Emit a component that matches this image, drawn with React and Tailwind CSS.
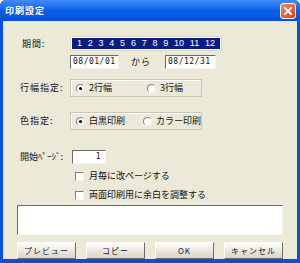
import React from "react";

const jp = { fontFamily: '"Noto Sans CJK JP", "Noto Sans", sans-serif' };

const Radio = ({ checked, label }) => (
  <div className="flex items-center gap-[4px] whitespace-nowrap">
    <span className="flex h-[9px] w-[9px] items-center justify-center rounded-full border border-t-[#808080] border-l-[#808080] border-b-[#f0f0f0] border-r-[#f0f0f0] bg-white">
      {checked && <span className="h-[3px] w-[3px] rounded-full bg-black" />}
    </span>
    <span>{label}</span>
  </div>
);

const Check = ({ label }) => (
  <div className="flex h-[12px] items-center gap-[5px] whitespace-nowrap pl-[72px]">
    <span className="h-[9px] w-[9px] border border-t-[#808080] border-l-[#808080] border-b-[#f4f3ee] border-r-[#f4f3ee] bg-white" />
    <span>{label}</span>
  </div>
);

const Field = ({ value, className = "" }) => (
  <div className={`flex h-[14px] items-center border border-t-[#6b6b6b] border-l-[#6b6b6b] border-b-[#f4f3ee] border-r-[#f4f3ee] bg-white px-[2px] text-[8px] tracking-[0.5px] ${className}`} style={{ fontFamily: '"DejaVu Sans Mono", monospace' }}>
    {value}
  </div>
);

const Btn = ({ children }) => (
  <button type="button" className="flex h-[17px] w-[59px] items-center justify-center whitespace-nowrap border border-t-white border-l-white border-b-[#6f6d62] border-r-[#6f6d62] bg-gradient-to-b from-[#fdfdfb] to-[#d8d5c8] text-[8px] tracking-[1px] text-[#222]">
    {children}
  </button>
);

export default function App() {
  const months = [1, 2, 3, 4, 5, 6, 7, 8, 9, 10, 11, 12];
  return (
    <div className="flex h-[263px] w-[300px] flex-col overflow-hidden rounded-t-[6px] bg-[#0a4fd8]" style={jp}>
      <div className="flex h-[21px] items-center justify-between bg-gradient-to-b from-[#3e8dfb] via-[#0a5fe8] to-[#0550d8] pl-[5px] pr-[4px]">
        <span className="text-[9px] font-bold tracking-[1px] text-white">印刷設定</span>
        <span className="flex h-[16px] w-[16px] items-center justify-center rounded-[3px] border border-white bg-gradient-to-br from-[#f08a63] to-[#d5431c]">
          <svg width="8" height="8" viewBox="0 0 8 8">
            <path d="M1 1 L7 7 M7 1 L1 7" stroke="white" strokeWidth="1.8" strokeLinecap="square" />
          </svg>
        </span>
      </div>
      <div className="mx-[3px] mb-[4px] flex flex-1 flex-col bg-[#ece9d8] text-[9px] text-[#111]">
        <div className="mt-[15px] flex h-[15px] items-center">
          <span className="w-[67px] pl-[19px] tracking-[1px]">期間:</span>
          <div className="flex h-[15px] w-[152px] items-center border border-[#d8d6cb] bg-white p-[1px]">
            <div className="flex h-full w-full items-center justify-around bg-[#0a1d80] px-[2px] text-[9px] text-white" style={{ fontFamily: '"Liberation Sans", sans-serif' }}>
              {months.map((m) => (
                <span key={m}>{m}</span>
              ))}
            </div>
          </div>
        </div>
        <div className="mt-[4px] flex h-[14px] items-center">
          <Field value="08/01/01" className="ml-[67px] w-[49px]" />
          <span className="ml-[12px] tracking-[1px]">から</span>
          <Field value="08/12/31" className="ml-[14px] w-[51px]" />
        </div>
        <div className="mt-[10px] flex h-[18px] items-center">
          <span className="w-[67px] pl-[17px] tracking-[1px]">行幅指定:</span>
          <div className="flex h-[18px] w-[132px] items-center border border-[#c9c6b6] pl-[5px] shadow-[inset_1px_1px_0_#fff]">
            <div className="w-[71px]"><Radio checked label="2行幅" /></div>
            <Radio label="3行幅" />
          </div>
        </div>
        <div className="mt-[15px] flex h-[18px] items-center">
          <span className="w-[67px] pl-[17px] tracking-[1px]">色指定:</span>
          <div className="flex h-[18px] w-[132px] items-center border border-[#c9c6b6] pl-[5px] shadow-[inset_1px_1px_0_#fff]">
            <div className="w-[71px]"><Radio checked label="白黒印刷" /></div>
            <Radio label="カラー印刷" />
          </div>
        </div>
        <div className="mt-[20px] flex h-[14px] items-center">
          <span className="w-[69px] pl-[17px]">開始ﾍﾟｰｼﾞ:</span>
          <Field value="1" className="w-[34px] justify-end pr-[4px]" />
        </div>
        <div className="mt-[6px]">
          <Check label="月毎に改ページする" />
        </div>
        <div className="mt-[7px]">
          <Check label="両面印刷用に余白を調整する" />
        </div>
        <div className="mx-[14px] mt-[4px] h-[30px] border border-t-[#6b6b6b] border-l-[#6b6b6b] border-b-[#f4f3ee] border-r-[#f4f3ee] bg-white" />
        <div className="mt-[7px] flex items-center gap-[10px] pl-[14px]">
          <Btn>プレビュー</Btn>
          <Btn>コピー</Btn>
          <Btn>OK</Btn>
          <Btn>キャンセル</Btn>
        </div>
      </div>
    </div>
  );
}
